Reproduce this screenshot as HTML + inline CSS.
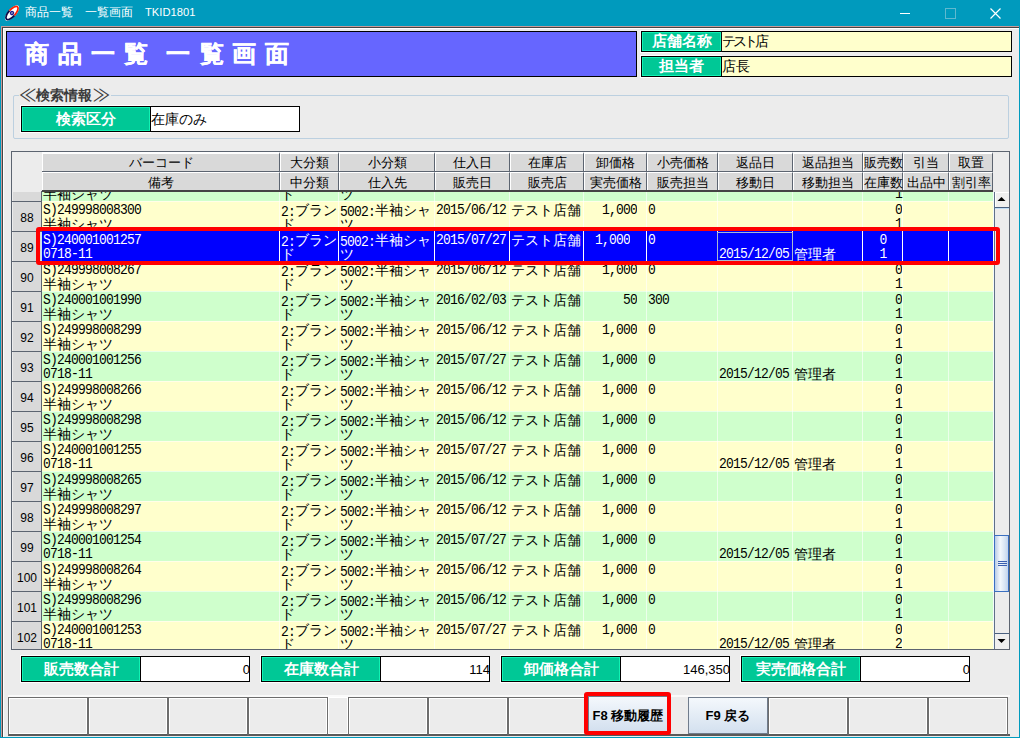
<!DOCTYPE html><html lang="ja"><head><meta charset="utf-8"><title>商品一覧</title><style>
html,body{margin:0;padding:0}
body{width:1020px;height:738px;position:relative;overflow:hidden;background:#009abd;font-family:"Liberation Sans",sans-serif;color:#000}
div{position:absolute;box-sizing:border-box;white-space:nowrap}
.m{font-family:"Liberation Mono",monospace;font-size:13px;letter-spacing:-0.8px;line-height:14px}
.m b{display:inline-block;font-weight:normal;transform:scaleY(1.13);transform-origin:0 10%}
.m i{font-style:normal;font-family:"Liberation Sans",sans-serif;font-size:14px;letter-spacing:0}
.hd{font-size:13px;line-height:18px;text-align:center;color:#000}
.lbl{background:#00c896;color:#fff;font-weight:bold;font-size:14.5px;text-align:center;box-shadow:inset 0 0 0 1px #12f2b4,0 0 0 1px #fff}
</style></head><body>
<svg style="position:absolute;left:3px;top:4px" width="18" height="18" viewBox="0 0 18 18"><g transform="rotate(-48 9 9)"><ellipse cx="9" cy="9" rx="9.6" ry="4.1" fill="#fff"/><path d="M9 5.6 A7.8 3.2 0 0 0 9 12.4" stroke="#0c0c48" stroke-width="1.8" fill="none"/><path d="M9 5.6 A7.8 3.2 0 0 1 9 12.4" stroke="#ff2200" stroke-width="1.8" fill="none"/><circle cx="9" cy="9" r="2.2" fill="#1c1c90"/><circle cx="9" cy="9" r="0.9" fill="#aab"/></g></svg>
<div style="left:25px;top:4px;font-size:12px;line-height:16px;color:#fff">商品一覧　一覧画面　<span style="font-size:11.2px">TKID1801</span></div>
<div style="left:900px;top:13px;width:10px;height:1px;background:#fff"></div>
<div style="left:945px;top:8px;width:11px;height:11px;border:1px solid #5fb9cf"></div>
<svg style="position:absolute;left:990px;top:8px" width="11" height="11"><path d="M0.5 0.5L10.5 10.5M10.5 0.5L0.5 10.5" stroke="#fff" stroke-width="1.2"/></svg>
<div style="left:1px;top:26px;width:1018px;height:711px;background:#ececec"></div>
<div style="left:1px;top:26px;width:1018px;height:1px;background:#c89a98"></div>
<div style="left:1px;top:26px;width:1px;height:711px;background:#c89a98"></div>
<div style="left:2px;top:27px;width:1px;height:710px;background:#444"></div>
<div style="left:2px;top:27px;width:1017px;height:1px;background:#444"></div>
<div style="left:3px;top:28px;width:1016px;height:1px;background:#fff"></div>
<div style="left:3px;top:28px;width:1px;height:709px;background:#fff"></div>
<div style="left:6px;top:31px;width:631px;height:46px;background:#6666ff;border:1px solid #000"></div>
<div style="left:21.8px;top:41px;width:30px;text-align:center;font-size:24px;line-height:26px;font-weight:bold;color:#fff;-webkit-text-stroke:0.3px #fff">商</div>
<div style="left:55.1px;top:41px;width:30px;text-align:center;font-size:24px;line-height:26px;font-weight:bold;color:#fff;-webkit-text-stroke:0.3px #fff">品</div>
<div style="left:88.0px;top:41px;width:30px;text-align:center;font-size:24px;line-height:26px;font-weight:bold;color:#fff;-webkit-text-stroke:0.3px #fff">一</div>
<div style="left:121.4px;top:41px;width:30px;text-align:center;font-size:24px;line-height:26px;font-weight:bold;color:#fff;-webkit-text-stroke:0.3px #fff">覧</div>
<div style="left:163.0px;top:41px;width:30px;text-align:center;font-size:24px;line-height:26px;font-weight:bold;color:#fff;-webkit-text-stroke:0.3px #fff">一</div>
<div style="left:196.5px;top:41px;width:30px;text-align:center;font-size:24px;line-height:26px;font-weight:bold;color:#fff;-webkit-text-stroke:0.3px #fff">覧</div>
<div style="left:228.9px;top:41px;width:30px;text-align:center;font-size:24px;line-height:26px;font-weight:bold;color:#fff;-webkit-text-stroke:0.3px #fff">画</div>
<div style="left:261.7px;top:41px;width:30px;text-align:center;font-size:24px;line-height:26px;font-weight:bold;color:#fff;-webkit-text-stroke:0.3px #fff">面</div>
<div style="left:641px;top:31px;width:80px;height:21px;border:1px solid #000;border-right:0;line-height:19px"></div>
<div class="lbl" style="left:641px;top:31px;width:80px;height:21px;border:1px solid #000;border-right:0;line-height:19px">店舗名称</div>
<div style="left:721px;top:31px;width:291px;height:21px;background:#ffffcc;border:1px solid #000;border-left:1px solid #111;font-size:14px;line-height:18px"><span style="letter-spacing:-3px">テスト</span>店</div>
<div class="lbl" style="left:641px;top:56px;width:80px;height:21px;border:1px solid #000;border-right:0;line-height:19px">担当者</div>
<div style="left:721px;top:56px;width:291px;height:21px;background:#ffffcc;border:1px solid #000;font-size:14px;line-height:18px">店長</div>
<div style="left:13px;top:95px;width:996px;height:44px;border:1px solid #bcd0e0;border-radius:2px"></div>
<div style="left:19px;top:87px;background:#ececec;font-size:14px;line-height:16px;color:#3a3a3a;font-weight:bold;padding:0 1px"><span style="display:inline-block;font-size:17px;font-weight:normal;transform:scale(1,1.4);margin-left:-1px">≪</span>検索情報<span style="display:inline-block;font-size:17px;font-weight:normal;transform:scale(1,1.4);margin-left:1px">≫</span></div>
<div class="lbl" style="left:21px;top:106px;width:129px;height:26px;border:1px solid #000;border-right:0;line-height:24px">検索区分</div>
<div style="left:150px;top:106px;width:150px;height:26px;background:#fff;border:1px solid #000;font-size:14px;line-height:24px">在庫のみ</div>
<div style="left:11px;top:151px;width:999px;height:499px;background:#fff;border:1px solid #5c6470"></div>
<div style="left:12px;top:152px;width:997px;height:497px;background:#ececec"></div>
<div style="left:13px;top:153px;width:29px;height:38px;background:#ececec"></div>
<div style="left:42px;top:152px;width:238px;height:19px;background:#d9d9d9;border-top:2px solid #fff;border-left:1px solid #fff;border-right:1px solid #5c6470"></div>
<div class="hd" style="left:42px;top:154px;width:238px">バーコード</div>
<div style="left:42px;top:171px;width:238px;height:1px;background:#5c6470"></div>
<div style="left:42px;top:172px;width:238px;height:18px;background:#d9d9d9;border-top:1px solid #fff;border-left:1px solid #fff;border-right:1px solid #5c6470"></div>
<div class="hd" style="left:42px;top:173.5px;width:238px">備考</div>
<div style="left:280px;top:152px;width:59px;height:19px;background:#d9d9d9;border-top:2px solid #fff;border-left:1px solid #fff;border-right:1px solid #5c6470"></div>
<div class="hd" style="left:280px;top:154px;width:59px">大分類</div>
<div style="left:280px;top:171px;width:59px;height:1px;background:#5c6470"></div>
<div style="left:280px;top:172px;width:59px;height:18px;background:#d9d9d9;border-top:1px solid #fff;border-left:1px solid #fff;border-right:1px solid #5c6470"></div>
<div class="hd" style="left:280px;top:173.5px;width:59px">中分類</div>
<div style="left:339px;top:152px;width:96px;height:19px;background:#d9d9d9;border-top:2px solid #fff;border-left:1px solid #fff;border-right:1px solid #5c6470"></div>
<div class="hd" style="left:339px;top:154px;width:96px">小分類</div>
<div style="left:339px;top:171px;width:96px;height:1px;background:#5c6470"></div>
<div style="left:339px;top:172px;width:96px;height:18px;background:#d9d9d9;border-top:1px solid #fff;border-left:1px solid #fff;border-right:1px solid #5c6470"></div>
<div class="hd" style="left:339px;top:173.5px;width:96px">仕入先</div>
<div style="left:435px;top:152px;width:75px;height:19px;background:#d9d9d9;border-top:2px solid #fff;border-left:1px solid #fff;border-right:1px solid #5c6470"></div>
<div class="hd" style="left:435px;top:154px;width:75px">仕入日</div>
<div style="left:435px;top:171px;width:75px;height:1px;background:#5c6470"></div>
<div style="left:435px;top:172px;width:75px;height:18px;background:#d9d9d9;border-top:1px solid #fff;border-left:1px solid #fff;border-right:1px solid #5c6470"></div>
<div class="hd" style="left:435px;top:173.5px;width:75px">販売日</div>
<div style="left:510px;top:152px;width:74px;height:19px;background:#d9d9d9;border-top:2px solid #fff;border-left:1px solid #fff;border-right:1px solid #5c6470"></div>
<div class="hd" style="left:510px;top:154px;width:74px">在庫店</div>
<div style="left:510px;top:171px;width:74px;height:1px;background:#5c6470"></div>
<div style="left:510px;top:172px;width:74px;height:18px;background:#d9d9d9;border-top:1px solid #fff;border-left:1px solid #fff;border-right:1px solid #5c6470"></div>
<div class="hd" style="left:510px;top:173.5px;width:74px">販売店</div>
<div style="left:584px;top:152px;width:63px;height:19px;background:#d9d9d9;border-top:2px solid #fff;border-left:1px solid #fff;border-right:1px solid #5c6470"></div>
<div class="hd" style="left:584px;top:154px;width:63px">卸価格</div>
<div style="left:584px;top:171px;width:63px;height:1px;background:#5c6470"></div>
<div style="left:584px;top:172px;width:63px;height:18px;background:#d9d9d9;border-top:1px solid #fff;border-left:1px solid #fff;border-right:1px solid #5c6470"></div>
<div class="hd" style="left:584px;top:173.5px;width:63px">実売価格</div>
<div style="left:647px;top:152px;width:71px;height:19px;background:#d9d9d9;border-top:2px solid #fff;border-left:1px solid #fff;border-right:1px solid #5c6470"></div>
<div class="hd" style="left:647px;top:154px;width:71px">小売価格</div>
<div style="left:647px;top:171px;width:71px;height:1px;background:#5c6470"></div>
<div style="left:647px;top:172px;width:71px;height:18px;background:#d9d9d9;border-top:1px solid #fff;border-left:1px solid #fff;border-right:1px solid #5c6470"></div>
<div class="hd" style="left:647px;top:173.5px;width:71px">販売担当</div>
<div style="left:718px;top:152px;width:75px;height:19px;background:#d9d9d9;border-top:2px solid #fff;border-left:1px solid #fff;border-right:1px solid #5c6470"></div>
<div class="hd" style="left:718px;top:154px;width:75px">返品日</div>
<div style="left:718px;top:171px;width:75px;height:1px;background:#5c6470"></div>
<div style="left:718px;top:172px;width:75px;height:18px;background:#d9d9d9;border-top:1px solid #fff;border-left:1px solid #fff;border-right:1px solid #5c6470"></div>
<div class="hd" style="left:718px;top:173.5px;width:75px">移動日</div>
<div style="left:793px;top:152px;width:70px;height:19px;background:#d9d9d9;border-top:2px solid #fff;border-left:1px solid #fff;border-right:1px solid #5c6470"></div>
<div class="hd" style="left:793px;top:154px;width:70px">返品担当</div>
<div style="left:793px;top:171px;width:70px;height:1px;background:#5c6470"></div>
<div style="left:793px;top:172px;width:70px;height:18px;background:#d9d9d9;border-top:1px solid #fff;border-left:1px solid #fff;border-right:1px solid #5c6470"></div>
<div class="hd" style="left:793px;top:173.5px;width:70px">移動担当</div>
<div style="left:863px;top:152px;width:40px;height:19px;background:#d9d9d9;border-top:2px solid #fff;border-left:1px solid #fff;border-right:1px solid #5c6470"></div>
<div class="hd" style="left:863px;top:154px;width:40px">販売数</div>
<div style="left:863px;top:171px;width:40px;height:1px;background:#5c6470"></div>
<div style="left:863px;top:172px;width:40px;height:18px;background:#d9d9d9;border-top:1px solid #fff;border-left:1px solid #fff;border-right:1px solid #5c6470"></div>
<div class="hd" style="left:863px;top:173.5px;width:40px">在庫数</div>
<div style="left:903px;top:152px;width:46px;height:19px;background:#d9d9d9;border-top:2px solid #fff;border-left:1px solid #fff;border-right:1px solid #5c6470"></div>
<div class="hd" style="left:903px;top:154px;width:46px">引当</div>
<div style="left:903px;top:171px;width:46px;height:1px;background:#5c6470"></div>
<div style="left:903px;top:172px;width:46px;height:18px;background:#d9d9d9;border-top:1px solid #fff;border-left:1px solid #fff;border-right:1px solid #5c6470"></div>
<div class="hd" style="left:903px;top:173.5px;width:46px">出品中</div>
<div style="left:949px;top:152px;width:44px;height:19px;background:#d9d9d9;border-top:2px solid #fff;border-left:1px solid #fff;border-right:1px solid #5c6470"></div>
<div class="hd" style="left:949px;top:154px;width:44px">取置</div>
<div style="left:949px;top:171px;width:44px;height:1px;background:#5c6470"></div>
<div style="left:949px;top:172px;width:44px;height:18px;background:#d9d9d9;border-top:1px solid #fff;border-left:1px solid #fff;border-right:1px solid #5c6470"></div>
<div class="hd" style="left:949px;top:173.5px;width:44px">割引率</div>
<div style="left:42px;top:190px;width:951px;height:2px;background:#444"></div>
<div style="left:42px;top:192px;width:951px;height:457px;overflow:hidden">
<div style="left:0;top:-21px;width:951px;height:30px;background:#cfffcc;color:#000">
<div style="left:0;top:0;width:951px;height:1px;background:rgba(255,255,255,.55)"></div>
<div style="left:237px;top:0;width:1px;height:30px;background:rgba(255,255,255,.6)"></div>
<div style="left:296px;top:0;width:1px;height:30px;background:rgba(255,255,255,.6)"></div>
<div style="left:392px;top:0;width:1px;height:30px;background:rgba(255,255,255,.6)"></div>
<div style="left:467px;top:0;width:1px;height:30px;background:rgba(255,255,255,.6)"></div>
<div style="left:541px;top:0;width:1px;height:30px;background:rgba(255,255,255,.6)"></div>
<div style="left:604px;top:0;width:1px;height:30px;background:rgba(255,255,255,.6)"></div>
<div style="left:675px;top:0;width:1px;height:30px;background:rgba(255,255,255,.6)"></div>
<div style="left:750px;top:0;width:1px;height:30px;background:rgba(255,255,255,.6)"></div>
<div style="left:820px;top:0;width:1px;height:30px;background:rgba(255,255,255,.6)"></div>
<div style="left:860px;top:0;width:1px;height:30px;background:rgba(255,255,255,.6)"></div>
<div style="left:906px;top:0;width:1px;height:30px;background:rgba(255,255,255,.6)"></div>
<div class="m" style="left:1px;top:2px;"><b>S)240001001258</b></div>
<div class="m" style="left:1px;top:16px;"><i>半袖シャツ</i></div>
<div class="m" style="left:239px;top:2px;"><b>2:</b><i>ブラン</i></div>
<div class="m" style="left:239px;top:16px;"><i>ド</i></div>
<div class="m" style="left:298px;top:2px;"><b>5002:</b><i>半袖シャ</i></div>
<div class="m" style="left:298px;top:16px;"><i>ツ</i></div>
<div class="m" style="left:394px;top:2px;"><b>2015/06/12</b></div>
<div class="m" style="left:469px;top:2px;"><i>テスト店舗</i></div>
<div class="m" style="right:356px;top:2px"><b>1,000</b></div>
<div class="m" style="left:606px;top:2px;"><b>0</b></div>
<div class="m" style="right:91px;top:2px;text-align:right"><b>0</b><br><b>1</b></div>
</div>
<div style="left:0;top:9px;width:951px;height:30px;background:#ffffcc;color:#000">
<div style="left:0;top:0;width:951px;height:1px;background:rgba(255,255,255,.55)"></div>
<div style="left:237px;top:0;width:1px;height:30px;background:rgba(255,255,255,.6)"></div>
<div style="left:296px;top:0;width:1px;height:30px;background:rgba(255,255,255,.6)"></div>
<div style="left:392px;top:0;width:1px;height:30px;background:rgba(255,255,255,.6)"></div>
<div style="left:467px;top:0;width:1px;height:30px;background:rgba(255,255,255,.6)"></div>
<div style="left:541px;top:0;width:1px;height:30px;background:rgba(255,255,255,.6)"></div>
<div style="left:604px;top:0;width:1px;height:30px;background:rgba(255,255,255,.6)"></div>
<div style="left:675px;top:0;width:1px;height:30px;background:rgba(255,255,255,.6)"></div>
<div style="left:750px;top:0;width:1px;height:30px;background:rgba(255,255,255,.6)"></div>
<div style="left:820px;top:0;width:1px;height:30px;background:rgba(255,255,255,.6)"></div>
<div style="left:860px;top:0;width:1px;height:30px;background:rgba(255,255,255,.6)"></div>
<div style="left:906px;top:0;width:1px;height:30px;background:rgba(255,255,255,.6)"></div>
<div class="m" style="left:1px;top:2px;"><b>S)249998008300</b></div>
<div class="m" style="left:1px;top:16px;"><i>半袖シャツ</i></div>
<div class="m" style="left:239px;top:2px;"><b>2:</b><i>ブラン</i></div>
<div class="m" style="left:239px;top:16px;"><i>ド</i></div>
<div class="m" style="left:298px;top:2px;"><b>5002:</b><i>半袖シャ</i></div>
<div class="m" style="left:298px;top:16px;"><i>ツ</i></div>
<div class="m" style="left:394px;top:2px;"><b>2015/06/12</b></div>
<div class="m" style="left:469px;top:2px;"><i>テスト店舗</i></div>
<div class="m" style="right:356px;top:2px"><b>1,000</b></div>
<div class="m" style="left:606px;top:2px;"><b>0</b></div>
<div class="m" style="right:91px;top:2px;text-align:right"><b>0</b><br><b>1</b></div>
</div>
<div style="left:0;top:39px;width:951px;height:30px;background:#0000ff;color:#fff">
<div style="left:237px;top:0;width:1px;height:30px;background:#fff"></div>
<div style="left:296px;top:0;width:1px;height:30px;background:#fff"></div>
<div style="left:392px;top:0;width:1px;height:30px;background:#fff"></div>
<div style="left:467px;top:0;width:1px;height:30px;background:#fff"></div>
<div style="left:541px;top:0;width:1px;height:30px;background:#fff"></div>
<div style="left:604px;top:0;width:1px;height:30px;background:#fff"></div>
<div style="left:675px;top:0;width:1px;height:30px;background:#fff"></div>
<div style="left:750px;top:0;width:1px;height:30px;background:#fff"></div>
<div style="left:820px;top:0;width:1px;height:30px;background:#fff"></div>
<div style="left:860px;top:0;width:1px;height:30px;background:#fff"></div>
<div style="left:906px;top:0;width:1px;height:30px;background:#fff"></div>
<div class="m" style="left:1px;top:2px;"><b>S)240001001257</b></div>
<div class="m" style="left:1px;top:16px;"><b>0718-11</b></div>
<div class="m" style="left:239px;top:2px;"><b>2:</b><i>ブラン</i></div>
<div class="m" style="left:239px;top:16px;"><i>ド</i></div>
<div class="m" style="left:298px;top:2px;"><b>5002:</b><i>半袖シャ</i></div>
<div class="m" style="left:298px;top:16px;"><i>ツ</i></div>
<div class="m" style="left:394px;top:2px;"><b>2015/07/27</b></div>
<div class="m" style="left:469px;top:2px;"><i>テスト店舗</i></div>
<div class="m" style="right:363px;top:2px"><b>1,000</b></div>
<div class="m" style="left:606px;top:2px;"><b>0</b></div>
<div class="m" style="left:677px;top:16px;"><b>2015/12/05</b></div>
<div class="m" style="left:752px;top:16px;"><i>管理者</i></div>
<div class="m" style="left:821px;top:2px;width:40px;text-align:center"><b>0</b><br><b>1</b></div>
<div style="left:675px;top:1px;width:76px;height:29px;border:1px solid #a9b8d0"></div>
</div>
<div style="left:0;top:69px;width:951px;height:30px;background:#ffffcc;color:#000">
<div style="left:0;top:0;width:951px;height:1px;background:rgba(255,255,255,.55)"></div>
<div style="left:237px;top:0;width:1px;height:30px;background:rgba(255,255,255,.6)"></div>
<div style="left:296px;top:0;width:1px;height:30px;background:rgba(255,255,255,.6)"></div>
<div style="left:392px;top:0;width:1px;height:30px;background:rgba(255,255,255,.6)"></div>
<div style="left:467px;top:0;width:1px;height:30px;background:rgba(255,255,255,.6)"></div>
<div style="left:541px;top:0;width:1px;height:30px;background:rgba(255,255,255,.6)"></div>
<div style="left:604px;top:0;width:1px;height:30px;background:rgba(255,255,255,.6)"></div>
<div style="left:675px;top:0;width:1px;height:30px;background:rgba(255,255,255,.6)"></div>
<div style="left:750px;top:0;width:1px;height:30px;background:rgba(255,255,255,.6)"></div>
<div style="left:820px;top:0;width:1px;height:30px;background:rgba(255,255,255,.6)"></div>
<div style="left:860px;top:0;width:1px;height:30px;background:rgba(255,255,255,.6)"></div>
<div style="left:906px;top:0;width:1px;height:30px;background:rgba(255,255,255,.6)"></div>
<div class="m" style="left:1px;top:2px;"><b>S)249998008267</b></div>
<div class="m" style="left:1px;top:16px;"><i>半袖シャツ</i></div>
<div class="m" style="left:239px;top:2px;"><b>2:</b><i>ブラン</i></div>
<div class="m" style="left:239px;top:16px;"><i>ド</i></div>
<div class="m" style="left:298px;top:2px;"><b>5002:</b><i>半袖シャ</i></div>
<div class="m" style="left:298px;top:16px;"><i>ツ</i></div>
<div class="m" style="left:394px;top:2px;"><b>2015/06/12</b></div>
<div class="m" style="left:469px;top:2px;"><i>テスト店舗</i></div>
<div class="m" style="right:356px;top:2px"><b>1,000</b></div>
<div class="m" style="left:606px;top:2px;"><b>0</b></div>
<div class="m" style="right:91px;top:2px;text-align:right"><b>0</b><br><b>1</b></div>
</div>
<div style="left:0;top:99px;width:951px;height:30px;background:#cfffcc;color:#000">
<div style="left:0;top:0;width:951px;height:1px;background:rgba(255,255,255,.55)"></div>
<div style="left:237px;top:0;width:1px;height:30px;background:rgba(255,255,255,.6)"></div>
<div style="left:296px;top:0;width:1px;height:30px;background:rgba(255,255,255,.6)"></div>
<div style="left:392px;top:0;width:1px;height:30px;background:rgba(255,255,255,.6)"></div>
<div style="left:467px;top:0;width:1px;height:30px;background:rgba(255,255,255,.6)"></div>
<div style="left:541px;top:0;width:1px;height:30px;background:rgba(255,255,255,.6)"></div>
<div style="left:604px;top:0;width:1px;height:30px;background:rgba(255,255,255,.6)"></div>
<div style="left:675px;top:0;width:1px;height:30px;background:rgba(255,255,255,.6)"></div>
<div style="left:750px;top:0;width:1px;height:30px;background:rgba(255,255,255,.6)"></div>
<div style="left:820px;top:0;width:1px;height:30px;background:rgba(255,255,255,.6)"></div>
<div style="left:860px;top:0;width:1px;height:30px;background:rgba(255,255,255,.6)"></div>
<div style="left:906px;top:0;width:1px;height:30px;background:rgba(255,255,255,.6)"></div>
<div class="m" style="left:1px;top:2px;"><b>S)240001001990</b></div>
<div class="m" style="left:1px;top:16px;"><i>半袖シャツ</i></div>
<div class="m" style="left:239px;top:2px;"><b>2:</b><i>ブラン</i></div>
<div class="m" style="left:239px;top:16px;"><i>ド</i></div>
<div class="m" style="left:298px;top:2px;"><b>5002:</b><i>半袖シャ</i></div>
<div class="m" style="left:298px;top:16px;"><i>ツ</i></div>
<div class="m" style="left:394px;top:2px;"><b>2016/02/03</b></div>
<div class="m" style="left:469px;top:2px;"><i>テスト店舗</i></div>
<div class="m" style="right:356px;top:2px"><b>50</b></div>
<div class="m" style="left:606px;top:2px;"><b>300</b></div>
<div class="m" style="right:91px;top:2px;text-align:right"><b>0</b><br><b>1</b></div>
</div>
<div style="left:0;top:129px;width:951px;height:30px;background:#ffffcc;color:#000">
<div style="left:0;top:0;width:951px;height:1px;background:rgba(255,255,255,.55)"></div>
<div style="left:237px;top:0;width:1px;height:30px;background:rgba(255,255,255,.6)"></div>
<div style="left:296px;top:0;width:1px;height:30px;background:rgba(255,255,255,.6)"></div>
<div style="left:392px;top:0;width:1px;height:30px;background:rgba(255,255,255,.6)"></div>
<div style="left:467px;top:0;width:1px;height:30px;background:rgba(255,255,255,.6)"></div>
<div style="left:541px;top:0;width:1px;height:30px;background:rgba(255,255,255,.6)"></div>
<div style="left:604px;top:0;width:1px;height:30px;background:rgba(255,255,255,.6)"></div>
<div style="left:675px;top:0;width:1px;height:30px;background:rgba(255,255,255,.6)"></div>
<div style="left:750px;top:0;width:1px;height:30px;background:rgba(255,255,255,.6)"></div>
<div style="left:820px;top:0;width:1px;height:30px;background:rgba(255,255,255,.6)"></div>
<div style="left:860px;top:0;width:1px;height:30px;background:rgba(255,255,255,.6)"></div>
<div style="left:906px;top:0;width:1px;height:30px;background:rgba(255,255,255,.6)"></div>
<div class="m" style="left:1px;top:2px;"><b>S)249998008299</b></div>
<div class="m" style="left:1px;top:16px;"><i>半袖シャツ</i></div>
<div class="m" style="left:239px;top:2px;"><b>2:</b><i>ブラン</i></div>
<div class="m" style="left:239px;top:16px;"><i>ド</i></div>
<div class="m" style="left:298px;top:2px;"><b>5002:</b><i>半袖シャ</i></div>
<div class="m" style="left:298px;top:16px;"><i>ツ</i></div>
<div class="m" style="left:394px;top:2px;"><b>2015/06/12</b></div>
<div class="m" style="left:469px;top:2px;"><i>テスト店舗</i></div>
<div class="m" style="right:356px;top:2px"><b>1,000</b></div>
<div class="m" style="left:606px;top:2px;"><b>0</b></div>
<div class="m" style="right:91px;top:2px;text-align:right"><b>0</b><br><b>1</b></div>
</div>
<div style="left:0;top:159px;width:951px;height:30px;background:#cfffcc;color:#000">
<div style="left:0;top:0;width:951px;height:1px;background:rgba(255,255,255,.55)"></div>
<div style="left:237px;top:0;width:1px;height:30px;background:rgba(255,255,255,.6)"></div>
<div style="left:296px;top:0;width:1px;height:30px;background:rgba(255,255,255,.6)"></div>
<div style="left:392px;top:0;width:1px;height:30px;background:rgba(255,255,255,.6)"></div>
<div style="left:467px;top:0;width:1px;height:30px;background:rgba(255,255,255,.6)"></div>
<div style="left:541px;top:0;width:1px;height:30px;background:rgba(255,255,255,.6)"></div>
<div style="left:604px;top:0;width:1px;height:30px;background:rgba(255,255,255,.6)"></div>
<div style="left:675px;top:0;width:1px;height:30px;background:rgba(255,255,255,.6)"></div>
<div style="left:750px;top:0;width:1px;height:30px;background:rgba(255,255,255,.6)"></div>
<div style="left:820px;top:0;width:1px;height:30px;background:rgba(255,255,255,.6)"></div>
<div style="left:860px;top:0;width:1px;height:30px;background:rgba(255,255,255,.6)"></div>
<div style="left:906px;top:0;width:1px;height:30px;background:rgba(255,255,255,.6)"></div>
<div class="m" style="left:1px;top:2px;"><b>S)240001001256</b></div>
<div class="m" style="left:1px;top:16px;"><b>0718-11</b></div>
<div class="m" style="left:239px;top:2px;"><b>2:</b><i>ブラン</i></div>
<div class="m" style="left:239px;top:16px;"><i>ド</i></div>
<div class="m" style="left:298px;top:2px;"><b>5002:</b><i>半袖シャ</i></div>
<div class="m" style="left:298px;top:16px;"><i>ツ</i></div>
<div class="m" style="left:394px;top:2px;"><b>2015/07/27</b></div>
<div class="m" style="left:469px;top:2px;"><i>テスト店舗</i></div>
<div class="m" style="right:356px;top:2px"><b>1,000</b></div>
<div class="m" style="left:606px;top:2px;"><b>0</b></div>
<div class="m" style="left:677px;top:16px;"><b>2015/12/05</b></div>
<div class="m" style="left:752px;top:16px;"><i>管理者</i></div>
<div class="m" style="right:91px;top:2px;text-align:right"><b>0</b><br><b>1</b></div>
</div>
<div style="left:0;top:189px;width:951px;height:30px;background:#ffffcc;color:#000">
<div style="left:0;top:0;width:951px;height:1px;background:rgba(255,255,255,.55)"></div>
<div style="left:237px;top:0;width:1px;height:30px;background:rgba(255,255,255,.6)"></div>
<div style="left:296px;top:0;width:1px;height:30px;background:rgba(255,255,255,.6)"></div>
<div style="left:392px;top:0;width:1px;height:30px;background:rgba(255,255,255,.6)"></div>
<div style="left:467px;top:0;width:1px;height:30px;background:rgba(255,255,255,.6)"></div>
<div style="left:541px;top:0;width:1px;height:30px;background:rgba(255,255,255,.6)"></div>
<div style="left:604px;top:0;width:1px;height:30px;background:rgba(255,255,255,.6)"></div>
<div style="left:675px;top:0;width:1px;height:30px;background:rgba(255,255,255,.6)"></div>
<div style="left:750px;top:0;width:1px;height:30px;background:rgba(255,255,255,.6)"></div>
<div style="left:820px;top:0;width:1px;height:30px;background:rgba(255,255,255,.6)"></div>
<div style="left:860px;top:0;width:1px;height:30px;background:rgba(255,255,255,.6)"></div>
<div style="left:906px;top:0;width:1px;height:30px;background:rgba(255,255,255,.6)"></div>
<div class="m" style="left:1px;top:2px;"><b>S)249998008266</b></div>
<div class="m" style="left:1px;top:16px;"><i>半袖シャツ</i></div>
<div class="m" style="left:239px;top:2px;"><b>2:</b><i>ブラン</i></div>
<div class="m" style="left:239px;top:16px;"><i>ド</i></div>
<div class="m" style="left:298px;top:2px;"><b>5002:</b><i>半袖シャ</i></div>
<div class="m" style="left:298px;top:16px;"><i>ツ</i></div>
<div class="m" style="left:394px;top:2px;"><b>2015/06/12</b></div>
<div class="m" style="left:469px;top:2px;"><i>テスト店舗</i></div>
<div class="m" style="right:356px;top:2px"><b>1,000</b></div>
<div class="m" style="left:606px;top:2px;"><b>0</b></div>
<div class="m" style="right:91px;top:2px;text-align:right"><b>0</b><br><b>1</b></div>
</div>
<div style="left:0;top:219px;width:951px;height:30px;background:#cfffcc;color:#000">
<div style="left:0;top:0;width:951px;height:1px;background:rgba(255,255,255,.55)"></div>
<div style="left:237px;top:0;width:1px;height:30px;background:rgba(255,255,255,.6)"></div>
<div style="left:296px;top:0;width:1px;height:30px;background:rgba(255,255,255,.6)"></div>
<div style="left:392px;top:0;width:1px;height:30px;background:rgba(255,255,255,.6)"></div>
<div style="left:467px;top:0;width:1px;height:30px;background:rgba(255,255,255,.6)"></div>
<div style="left:541px;top:0;width:1px;height:30px;background:rgba(255,255,255,.6)"></div>
<div style="left:604px;top:0;width:1px;height:30px;background:rgba(255,255,255,.6)"></div>
<div style="left:675px;top:0;width:1px;height:30px;background:rgba(255,255,255,.6)"></div>
<div style="left:750px;top:0;width:1px;height:30px;background:rgba(255,255,255,.6)"></div>
<div style="left:820px;top:0;width:1px;height:30px;background:rgba(255,255,255,.6)"></div>
<div style="left:860px;top:0;width:1px;height:30px;background:rgba(255,255,255,.6)"></div>
<div style="left:906px;top:0;width:1px;height:30px;background:rgba(255,255,255,.6)"></div>
<div class="m" style="left:1px;top:2px;"><b>S)249998008298</b></div>
<div class="m" style="left:1px;top:16px;"><i>半袖シャツ</i></div>
<div class="m" style="left:239px;top:2px;"><b>2:</b><i>ブラン</i></div>
<div class="m" style="left:239px;top:16px;"><i>ド</i></div>
<div class="m" style="left:298px;top:2px;"><b>5002:</b><i>半袖シャ</i></div>
<div class="m" style="left:298px;top:16px;"><i>ツ</i></div>
<div class="m" style="left:394px;top:2px;"><b>2015/06/12</b></div>
<div class="m" style="left:469px;top:2px;"><i>テスト店舗</i></div>
<div class="m" style="right:356px;top:2px"><b>1,000</b></div>
<div class="m" style="left:606px;top:2px;"><b>0</b></div>
<div class="m" style="right:91px;top:2px;text-align:right"><b>0</b><br><b>1</b></div>
</div>
<div style="left:0;top:249px;width:951px;height:30px;background:#ffffcc;color:#000">
<div style="left:0;top:0;width:951px;height:1px;background:rgba(255,255,255,.55)"></div>
<div style="left:237px;top:0;width:1px;height:30px;background:rgba(255,255,255,.6)"></div>
<div style="left:296px;top:0;width:1px;height:30px;background:rgba(255,255,255,.6)"></div>
<div style="left:392px;top:0;width:1px;height:30px;background:rgba(255,255,255,.6)"></div>
<div style="left:467px;top:0;width:1px;height:30px;background:rgba(255,255,255,.6)"></div>
<div style="left:541px;top:0;width:1px;height:30px;background:rgba(255,255,255,.6)"></div>
<div style="left:604px;top:0;width:1px;height:30px;background:rgba(255,255,255,.6)"></div>
<div style="left:675px;top:0;width:1px;height:30px;background:rgba(255,255,255,.6)"></div>
<div style="left:750px;top:0;width:1px;height:30px;background:rgba(255,255,255,.6)"></div>
<div style="left:820px;top:0;width:1px;height:30px;background:rgba(255,255,255,.6)"></div>
<div style="left:860px;top:0;width:1px;height:30px;background:rgba(255,255,255,.6)"></div>
<div style="left:906px;top:0;width:1px;height:30px;background:rgba(255,255,255,.6)"></div>
<div class="m" style="left:1px;top:2px;"><b>S)240001001255</b></div>
<div class="m" style="left:1px;top:16px;"><b>0718-11</b></div>
<div class="m" style="left:239px;top:2px;"><b>2:</b><i>ブラン</i></div>
<div class="m" style="left:239px;top:16px;"><i>ド</i></div>
<div class="m" style="left:298px;top:2px;"><b>5002:</b><i>半袖シャ</i></div>
<div class="m" style="left:298px;top:16px;"><i>ツ</i></div>
<div class="m" style="left:394px;top:2px;"><b>2015/07/27</b></div>
<div class="m" style="left:469px;top:2px;"><i>テスト店舗</i></div>
<div class="m" style="right:356px;top:2px"><b>1,000</b></div>
<div class="m" style="left:606px;top:2px;"><b>0</b></div>
<div class="m" style="left:677px;top:16px;"><b>2015/12/05</b></div>
<div class="m" style="left:752px;top:16px;"><i>管理者</i></div>
<div class="m" style="right:91px;top:2px;text-align:right"><b>0</b><br><b>1</b></div>
</div>
<div style="left:0;top:279px;width:951px;height:30px;background:#cfffcc;color:#000">
<div style="left:0;top:0;width:951px;height:1px;background:rgba(255,255,255,.55)"></div>
<div style="left:237px;top:0;width:1px;height:30px;background:rgba(255,255,255,.6)"></div>
<div style="left:296px;top:0;width:1px;height:30px;background:rgba(255,255,255,.6)"></div>
<div style="left:392px;top:0;width:1px;height:30px;background:rgba(255,255,255,.6)"></div>
<div style="left:467px;top:0;width:1px;height:30px;background:rgba(255,255,255,.6)"></div>
<div style="left:541px;top:0;width:1px;height:30px;background:rgba(255,255,255,.6)"></div>
<div style="left:604px;top:0;width:1px;height:30px;background:rgba(255,255,255,.6)"></div>
<div style="left:675px;top:0;width:1px;height:30px;background:rgba(255,255,255,.6)"></div>
<div style="left:750px;top:0;width:1px;height:30px;background:rgba(255,255,255,.6)"></div>
<div style="left:820px;top:0;width:1px;height:30px;background:rgba(255,255,255,.6)"></div>
<div style="left:860px;top:0;width:1px;height:30px;background:rgba(255,255,255,.6)"></div>
<div style="left:906px;top:0;width:1px;height:30px;background:rgba(255,255,255,.6)"></div>
<div class="m" style="left:1px;top:2px;"><b>S)249998008265</b></div>
<div class="m" style="left:1px;top:16px;"><i>半袖シャツ</i></div>
<div class="m" style="left:239px;top:2px;"><b>2:</b><i>ブラン</i></div>
<div class="m" style="left:239px;top:16px;"><i>ド</i></div>
<div class="m" style="left:298px;top:2px;"><b>5002:</b><i>半袖シャ</i></div>
<div class="m" style="left:298px;top:16px;"><i>ツ</i></div>
<div class="m" style="left:394px;top:2px;"><b>2015/06/12</b></div>
<div class="m" style="left:469px;top:2px;"><i>テスト店舗</i></div>
<div class="m" style="right:356px;top:2px"><b>1,000</b></div>
<div class="m" style="left:606px;top:2px;"><b>0</b></div>
<div class="m" style="right:91px;top:2px;text-align:right"><b>0</b><br><b>1</b></div>
</div>
<div style="left:0;top:309px;width:951px;height:30px;background:#ffffcc;color:#000">
<div style="left:0;top:0;width:951px;height:1px;background:rgba(255,255,255,.55)"></div>
<div style="left:237px;top:0;width:1px;height:30px;background:rgba(255,255,255,.6)"></div>
<div style="left:296px;top:0;width:1px;height:30px;background:rgba(255,255,255,.6)"></div>
<div style="left:392px;top:0;width:1px;height:30px;background:rgba(255,255,255,.6)"></div>
<div style="left:467px;top:0;width:1px;height:30px;background:rgba(255,255,255,.6)"></div>
<div style="left:541px;top:0;width:1px;height:30px;background:rgba(255,255,255,.6)"></div>
<div style="left:604px;top:0;width:1px;height:30px;background:rgba(255,255,255,.6)"></div>
<div style="left:675px;top:0;width:1px;height:30px;background:rgba(255,255,255,.6)"></div>
<div style="left:750px;top:0;width:1px;height:30px;background:rgba(255,255,255,.6)"></div>
<div style="left:820px;top:0;width:1px;height:30px;background:rgba(255,255,255,.6)"></div>
<div style="left:860px;top:0;width:1px;height:30px;background:rgba(255,255,255,.6)"></div>
<div style="left:906px;top:0;width:1px;height:30px;background:rgba(255,255,255,.6)"></div>
<div class="m" style="left:1px;top:2px;"><b>S)249998008297</b></div>
<div class="m" style="left:1px;top:16px;"><i>半袖シャツ</i></div>
<div class="m" style="left:239px;top:2px;"><b>2:</b><i>ブラン</i></div>
<div class="m" style="left:239px;top:16px;"><i>ド</i></div>
<div class="m" style="left:298px;top:2px;"><b>5002:</b><i>半袖シャ</i></div>
<div class="m" style="left:298px;top:16px;"><i>ツ</i></div>
<div class="m" style="left:394px;top:2px;"><b>2015/06/12</b></div>
<div class="m" style="left:469px;top:2px;"><i>テスト店舗</i></div>
<div class="m" style="right:356px;top:2px"><b>1,000</b></div>
<div class="m" style="left:606px;top:2px;"><b>0</b></div>
<div class="m" style="right:91px;top:2px;text-align:right"><b>0</b><br><b>1</b></div>
</div>
<div style="left:0;top:339px;width:951px;height:30px;background:#cfffcc;color:#000">
<div style="left:0;top:0;width:951px;height:1px;background:rgba(255,255,255,.55)"></div>
<div style="left:237px;top:0;width:1px;height:30px;background:rgba(255,255,255,.6)"></div>
<div style="left:296px;top:0;width:1px;height:30px;background:rgba(255,255,255,.6)"></div>
<div style="left:392px;top:0;width:1px;height:30px;background:rgba(255,255,255,.6)"></div>
<div style="left:467px;top:0;width:1px;height:30px;background:rgba(255,255,255,.6)"></div>
<div style="left:541px;top:0;width:1px;height:30px;background:rgba(255,255,255,.6)"></div>
<div style="left:604px;top:0;width:1px;height:30px;background:rgba(255,255,255,.6)"></div>
<div style="left:675px;top:0;width:1px;height:30px;background:rgba(255,255,255,.6)"></div>
<div style="left:750px;top:0;width:1px;height:30px;background:rgba(255,255,255,.6)"></div>
<div style="left:820px;top:0;width:1px;height:30px;background:rgba(255,255,255,.6)"></div>
<div style="left:860px;top:0;width:1px;height:30px;background:rgba(255,255,255,.6)"></div>
<div style="left:906px;top:0;width:1px;height:30px;background:rgba(255,255,255,.6)"></div>
<div class="m" style="left:1px;top:2px;"><b>S)240001001254</b></div>
<div class="m" style="left:1px;top:16px;"><b>0718-11</b></div>
<div class="m" style="left:239px;top:2px;"><b>2:</b><i>ブラン</i></div>
<div class="m" style="left:239px;top:16px;"><i>ド</i></div>
<div class="m" style="left:298px;top:2px;"><b>5002:</b><i>半袖シャ</i></div>
<div class="m" style="left:298px;top:16px;"><i>ツ</i></div>
<div class="m" style="left:394px;top:2px;"><b>2015/07/27</b></div>
<div class="m" style="left:469px;top:2px;"><i>テスト店舗</i></div>
<div class="m" style="right:356px;top:2px"><b>1,000</b></div>
<div class="m" style="left:606px;top:2px;"><b>0</b></div>
<div class="m" style="left:677px;top:16px;"><b>2015/12/05</b></div>
<div class="m" style="left:752px;top:16px;"><i>管理者</i></div>
<div class="m" style="right:91px;top:2px;text-align:right"><b>0</b><br><b>1</b></div>
</div>
<div style="left:0;top:369px;width:951px;height:30px;background:#ffffcc;color:#000">
<div style="left:0;top:0;width:951px;height:1px;background:rgba(255,255,255,.55)"></div>
<div style="left:237px;top:0;width:1px;height:30px;background:rgba(255,255,255,.6)"></div>
<div style="left:296px;top:0;width:1px;height:30px;background:rgba(255,255,255,.6)"></div>
<div style="left:392px;top:0;width:1px;height:30px;background:rgba(255,255,255,.6)"></div>
<div style="left:467px;top:0;width:1px;height:30px;background:rgba(255,255,255,.6)"></div>
<div style="left:541px;top:0;width:1px;height:30px;background:rgba(255,255,255,.6)"></div>
<div style="left:604px;top:0;width:1px;height:30px;background:rgba(255,255,255,.6)"></div>
<div style="left:675px;top:0;width:1px;height:30px;background:rgba(255,255,255,.6)"></div>
<div style="left:750px;top:0;width:1px;height:30px;background:rgba(255,255,255,.6)"></div>
<div style="left:820px;top:0;width:1px;height:30px;background:rgba(255,255,255,.6)"></div>
<div style="left:860px;top:0;width:1px;height:30px;background:rgba(255,255,255,.6)"></div>
<div style="left:906px;top:0;width:1px;height:30px;background:rgba(255,255,255,.6)"></div>
<div class="m" style="left:1px;top:2px;"><b>S)249998008264</b></div>
<div class="m" style="left:1px;top:16px;"><i>半袖シャツ</i></div>
<div class="m" style="left:239px;top:2px;"><b>2:</b><i>ブラン</i></div>
<div class="m" style="left:239px;top:16px;"><i>ド</i></div>
<div class="m" style="left:298px;top:2px;"><b>5002:</b><i>半袖シャ</i></div>
<div class="m" style="left:298px;top:16px;"><i>ツ</i></div>
<div class="m" style="left:394px;top:2px;"><b>2015/06/12</b></div>
<div class="m" style="left:469px;top:2px;"><i>テスト店舗</i></div>
<div class="m" style="right:356px;top:2px"><b>1,000</b></div>
<div class="m" style="left:606px;top:2px;"><b>0</b></div>
<div class="m" style="right:91px;top:2px;text-align:right"><b>0</b><br><b>1</b></div>
</div>
<div style="left:0;top:399px;width:951px;height:30px;background:#cfffcc;color:#000">
<div style="left:0;top:0;width:951px;height:1px;background:rgba(255,255,255,.55)"></div>
<div style="left:237px;top:0;width:1px;height:30px;background:rgba(255,255,255,.6)"></div>
<div style="left:296px;top:0;width:1px;height:30px;background:rgba(255,255,255,.6)"></div>
<div style="left:392px;top:0;width:1px;height:30px;background:rgba(255,255,255,.6)"></div>
<div style="left:467px;top:0;width:1px;height:30px;background:rgba(255,255,255,.6)"></div>
<div style="left:541px;top:0;width:1px;height:30px;background:rgba(255,255,255,.6)"></div>
<div style="left:604px;top:0;width:1px;height:30px;background:rgba(255,255,255,.6)"></div>
<div style="left:675px;top:0;width:1px;height:30px;background:rgba(255,255,255,.6)"></div>
<div style="left:750px;top:0;width:1px;height:30px;background:rgba(255,255,255,.6)"></div>
<div style="left:820px;top:0;width:1px;height:30px;background:rgba(255,255,255,.6)"></div>
<div style="left:860px;top:0;width:1px;height:30px;background:rgba(255,255,255,.6)"></div>
<div style="left:906px;top:0;width:1px;height:30px;background:rgba(255,255,255,.6)"></div>
<div class="m" style="left:1px;top:2px;"><b>S)249998008296</b></div>
<div class="m" style="left:1px;top:16px;"><i>半袖シャツ</i></div>
<div class="m" style="left:239px;top:2px;"><b>2:</b><i>ブラン</i></div>
<div class="m" style="left:239px;top:16px;"><i>ド</i></div>
<div class="m" style="left:298px;top:2px;"><b>5002:</b><i>半袖シャ</i></div>
<div class="m" style="left:298px;top:16px;"><i>ツ</i></div>
<div class="m" style="left:394px;top:2px;"><b>2015/06/12</b></div>
<div class="m" style="left:469px;top:2px;"><i>テスト店舗</i></div>
<div class="m" style="right:356px;top:2px"><b>1,000</b></div>
<div class="m" style="left:606px;top:2px;"><b>0</b></div>
<div class="m" style="right:91px;top:2px;text-align:right"><b>0</b><br><b>1</b></div>
</div>
<div style="left:0;top:429px;width:951px;height:30px;background:#ffffcc;color:#000">
<div style="left:0;top:0;width:951px;height:1px;background:rgba(255,255,255,.55)"></div>
<div style="left:237px;top:0;width:1px;height:30px;background:rgba(255,255,255,.6)"></div>
<div style="left:296px;top:0;width:1px;height:30px;background:rgba(255,255,255,.6)"></div>
<div style="left:392px;top:0;width:1px;height:30px;background:rgba(255,255,255,.6)"></div>
<div style="left:467px;top:0;width:1px;height:30px;background:rgba(255,255,255,.6)"></div>
<div style="left:541px;top:0;width:1px;height:30px;background:rgba(255,255,255,.6)"></div>
<div style="left:604px;top:0;width:1px;height:30px;background:rgba(255,255,255,.6)"></div>
<div style="left:675px;top:0;width:1px;height:30px;background:rgba(255,255,255,.6)"></div>
<div style="left:750px;top:0;width:1px;height:30px;background:rgba(255,255,255,.6)"></div>
<div style="left:820px;top:0;width:1px;height:30px;background:rgba(255,255,255,.6)"></div>
<div style="left:860px;top:0;width:1px;height:30px;background:rgba(255,255,255,.6)"></div>
<div style="left:906px;top:0;width:1px;height:30px;background:rgba(255,255,255,.6)"></div>
<div class="m" style="left:1px;top:2px;"><b>S)240001001253</b></div>
<div class="m" style="left:1px;top:16px;"><b>0718-11</b></div>
<div class="m" style="left:239px;top:2px;"><b>2:</b><i>ブラン</i></div>
<div class="m" style="left:239px;top:16px;"><i>ド</i></div>
<div class="m" style="left:298px;top:2px;"><b>5002:</b><i>半袖シャ</i></div>
<div class="m" style="left:298px;top:16px;"><i>ツ</i></div>
<div class="m" style="left:394px;top:2px;"><b>2015/07/27</b></div>
<div class="m" style="left:469px;top:2px;"><i>テスト店舗</i></div>
<div class="m" style="right:356px;top:2px"><b>1,000</b></div>
<div class="m" style="left:606px;top:2px;"><b>0</b></div>
<div class="m" style="left:677px;top:16px;"><b>2015/12/05</b></div>
<div class="m" style="left:752px;top:16px;"><i>管理者</i></div>
<div class="m" style="right:91px;top:2px;text-align:right"><b>0</b><br><b>2</b></div>
</div>
</div>
<div style="left:12px;top:192px;width:30px;height:457px;overflow:hidden">
<div style="left:1px;top:-20px;width:28px;height:29px;background:#d9d9d9;font-size:12px;line-height:29px;text-align:center;padding-top:2px">87</div>
<div style="left:0;top:-21px;width:30px;height:1px;background:#5c6470"></div>
<div style="left:1px;top:10px;width:28px;height:29px;background:#d9d9d9;font-size:12px;line-height:29px;text-align:center;padding-top:2px">88</div>
<div style="left:0;top:9px;width:30px;height:1px;background:#5c6470"></div>
<div style="left:1px;top:40px;width:28px;height:29px;background:#d9d9d9;font-size:12px;line-height:29px;text-align:center;padding-top:2px">89</div>
<div style="left:0;top:39px;width:30px;height:1px;background:#5c6470"></div>
<div style="left:1px;top:70px;width:28px;height:29px;background:#d9d9d9;font-size:12px;line-height:29px;text-align:center;padding-top:2px">90</div>
<div style="left:0;top:69px;width:30px;height:1px;background:#5c6470"></div>
<div style="left:1px;top:100px;width:28px;height:29px;background:#d9d9d9;font-size:12px;line-height:29px;text-align:center;padding-top:2px">91</div>
<div style="left:0;top:99px;width:30px;height:1px;background:#5c6470"></div>
<div style="left:1px;top:130px;width:28px;height:29px;background:#d9d9d9;font-size:12px;line-height:29px;text-align:center;padding-top:2px">92</div>
<div style="left:0;top:129px;width:30px;height:1px;background:#5c6470"></div>
<div style="left:1px;top:160px;width:28px;height:29px;background:#d9d9d9;font-size:12px;line-height:29px;text-align:center;padding-top:2px">93</div>
<div style="left:0;top:159px;width:30px;height:1px;background:#5c6470"></div>
<div style="left:1px;top:190px;width:28px;height:29px;background:#d9d9d9;font-size:12px;line-height:29px;text-align:center;padding-top:2px">94</div>
<div style="left:0;top:189px;width:30px;height:1px;background:#5c6470"></div>
<div style="left:1px;top:220px;width:28px;height:29px;background:#d9d9d9;font-size:12px;line-height:29px;text-align:center;padding-top:2px">95</div>
<div style="left:0;top:219px;width:30px;height:1px;background:#5c6470"></div>
<div style="left:1px;top:250px;width:28px;height:29px;background:#d9d9d9;font-size:12px;line-height:29px;text-align:center;padding-top:2px">96</div>
<div style="left:0;top:249px;width:30px;height:1px;background:#5c6470"></div>
<div style="left:1px;top:280px;width:28px;height:29px;background:#d9d9d9;font-size:12px;line-height:29px;text-align:center;padding-top:2px">97</div>
<div style="left:0;top:279px;width:30px;height:1px;background:#5c6470"></div>
<div style="left:1px;top:310px;width:28px;height:29px;background:#d9d9d9;font-size:12px;line-height:29px;text-align:center;padding-top:2px">98</div>
<div style="left:0;top:309px;width:30px;height:1px;background:#5c6470"></div>
<div style="left:1px;top:340px;width:28px;height:29px;background:#d9d9d9;font-size:12px;line-height:29px;text-align:center;padding-top:2px">99</div>
<div style="left:0;top:339px;width:30px;height:1px;background:#5c6470"></div>
<div style="left:1px;top:370px;width:28px;height:29px;background:#d9d9d9;font-size:12px;line-height:29px;text-align:center;padding-top:2px">100</div>
<div style="left:0;top:369px;width:30px;height:1px;background:#5c6470"></div>
<div style="left:1px;top:400px;width:28px;height:29px;background:#d9d9d9;font-size:12px;line-height:29px;text-align:center;padding-top:2px">101</div>
<div style="left:0;top:399px;width:30px;height:1px;background:#5c6470"></div>
<div style="left:1px;top:430px;width:28px;height:29px;background:#d9d9d9;font-size:12px;line-height:29px;text-align:center;padding-top:2px">102</div>
<div style="left:0;top:429px;width:30px;height:1px;background:#5c6470"></div>
</div>
<div style="left:993px;top:192px;width:1px;height:457px;background:#f4fbfb"></div>
<div style="left:994px;top:192px;width:15px;height:457px;background:#ececec;border-left:1px solid #5f7088"></div>
<div style="left:995px;top:192px;width:14px;height:15px;background:#efefef;border-left:1px solid #fff;border-top:1px solid #fff"></div>
<div style="left:995px;top:207px;width:14px;height:1px;background:#4a6080"></div>
<div style="left:995px;top:208px;width:14px;height:1px;background:#c0dcf4"></div>
<svg style="position:absolute;left:997px;top:196px" width="10" height="6"><path d="M0.5 5L4.5 1L8.5 5Z" fill="#000"/></svg>
<div style="left:994px;top:535px;width:15px;height:57px;background:linear-gradient(to right,#b9cce6,#f4f8fc 40%,#dde8f5 70%,#c3d4ec);border:1px solid #3a6fc0"></div>
<div style="left:998px;top:561px;width:9px;height:1px;background:#3a5fb0"></div>
<div style="left:998px;top:563px;width:9px;height:1px;background:#3a5fb0"></div>
<div style="left:998px;top:565px;width:9px;height:1px;background:#3a5fb0"></div>
<div style="left:995px;top:633px;width:14px;height:16px;background:#efefef;border-top:1px solid #4a6080"></div>
<svg style="position:absolute;left:997px;top:638px" width="10" height="6"><path d="M0.5 1L4.5 5L8.5 1Z" fill="#000"/></svg>
<div style="left:41px;top:191px;width:1px;height:458px;background:#5c6470"></div>
<div style="left:41px;top:232px;width:1px;height:29px;background:#bfe8f0"></div>
<div style="left:36px;top:227px;width:964px;height:38px;border:4px solid #f00;border-radius:3px"></div>
<div class="lbl" style="left:21px;top:656px;width:119px;height:26px;border:1px solid #000;border-right:0;line-height:24px">販売数合計</div>
<div style="left:140px;top:656px;width:110px;height:26px;background:#fff;border:1px solid #000;border-right:0;font-size:13px;line-height:26px;text-align:right;padding-right:0px">0</div>
<div style="left:249px;top:656px;width:1px;height:26px;background:#000"></div>
<div class="lbl" style="left:261px;top:656px;width:119px;height:26px;border:1px solid #000;border-right:0;line-height:24px">在庫数合計</div>
<div style="left:380px;top:656px;width:110px;height:26px;background:#fff;border:1px solid #000;border-right:0;font-size:13px;line-height:26px;text-align:right;padding-right:0px">114</div>
<div style="left:489px;top:656px;width:1px;height:26px;background:#000"></div>
<div class="lbl" style="left:501px;top:656px;width:119px;height:26px;border:1px solid #000;border-right:0;line-height:24px">卸価格合計</div>
<div style="left:620px;top:656px;width:110px;height:26px;background:#fff;border:1px solid #000;border-right:0;font-size:13px;line-height:26px;text-align:right;padding-right:0px">146,350</div>
<div style="left:729px;top:656px;width:1px;height:26px;background:#000"></div>
<div class="lbl" style="left:741px;top:656px;width:119px;height:26px;border:1px solid #000;border-right:0;line-height:24px">実売価格合計</div>
<div style="left:860px;top:656px;width:110px;height:26px;background:#fff;border:1px solid #000;border-right:0;font-size:13px;line-height:26px;text-align:right;padding-right:0px">0</div>
<div style="left:969px;top:656px;width:1px;height:26px;background:#000"></div>
<div style="left:8px;top:695px;width:1002px;height:2px;background:#fafafa"></div>
<div style="left:8px;top:734px;width:1002px;height:2px;background:#5a5a5a"></div>
<div style="left:328px;top:697px;width:20px;height:37px;border:1px solid #fff"></div>
<div style="left:8px;top:697px;width:80px;height:39px;background:#ececec;border:1px solid #6d6d6d;border-bottom:2px solid #5a5a5a;box-shadow:inset 1px 1px 0 #fff,inset -1px -1px 0 #fff"></div>
<div style="left:88px;top:697px;width:80px;height:39px;background:#ececec;border:1px solid #6d6d6d;border-bottom:2px solid #5a5a5a;box-shadow:inset 1px 1px 0 #fff,inset -1px -1px 0 #fff"></div>
<div style="left:168px;top:697px;width:80px;height:39px;background:#ececec;border:1px solid #6d6d6d;border-bottom:2px solid #5a5a5a;box-shadow:inset 1px 1px 0 #fff,inset -1px -1px 0 #fff"></div>
<div style="left:248px;top:697px;width:80px;height:39px;background:#ececec;border:1px solid #6d6d6d;border-bottom:2px solid #5a5a5a;box-shadow:inset 1px 1px 0 #fff,inset -1px -1px 0 #fff"></div>
<div style="left:348px;top:697px;width:80px;height:39px;background:#ececec;border:1px solid #6d6d6d;border-bottom:2px solid #5a5a5a;box-shadow:inset 1px 1px 0 #fff,inset -1px -1px 0 #fff"></div>
<div style="left:428px;top:697px;width:80px;height:39px;background:#ececec;border:1px solid #6d6d6d;border-bottom:2px solid #5a5a5a;box-shadow:inset 1px 1px 0 #fff,inset -1px -1px 0 #fff"></div>
<div style="left:508px;top:697px;width:80px;height:39px;background:#ececec;border:1px solid #6d6d6d;border-bottom:2px solid #5a5a5a;box-shadow:inset 1px 1px 0 #fff,inset -1px -1px 0 #fff"></div>
<div style="left:588px;top:696px;width:80px;height:36px;background:linear-gradient(#f4f8fc,#d3e0ef);border:1px solid #707c8c;font-size:13px;font-weight:bold;line-height:37px;text-align:center">F8 移動履歴</div>
<div style="left:688px;top:697px;width:80px;height:37px;background:linear-gradient(#f4f8fc,#d3e0ef);border:1px solid #707c8c;font-size:13px;font-weight:bold;line-height:35px;text-align:center">F9 戻る</div>
<div style="left:768px;top:697px;width:80px;height:39px;background:#ececec;border:1px solid #6d6d6d;border-bottom:2px solid #5a5a5a;box-shadow:inset 1px 1px 0 #fff,inset -1px -1px 0 #fff"></div>
<div style="left:848px;top:697px;width:80px;height:39px;background:#ececec;border:1px solid #6d6d6d;border-bottom:2px solid #5a5a5a;box-shadow:inset 1px 1px 0 #fff,inset -1px -1px 0 #fff"></div>
<div style="left:928px;top:697px;width:80px;height:39px;background:#ececec;border:1px solid #6d6d6d;border-bottom:2px solid #5a5a5a;box-shadow:inset 1px 1px 0 #fff,inset -1px -1px 0 #fff"></div>
<div style="left:584px;top:692px;width:87px;height:43px;border:4px solid #f00;border-radius:3px"></div>
</body></html>
